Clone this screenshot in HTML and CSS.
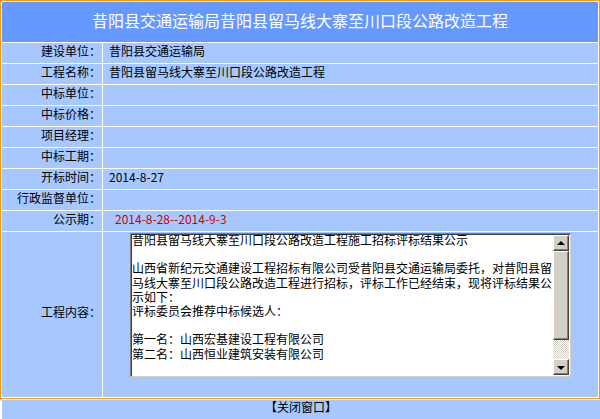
FILE: index.html
```html
<!DOCTYPE html>
<html lang="zh-CN">
<head>
<meta charset="utf-8">
<title>昔阳县交通运输局昔阳县留马线大寨至川口段公路改造工程</title>
<link rel="stylesheet" href="styles.css">
</head>
<body>
<div class="frame">
  <div class="title">昔阳县交通运输局昔阳县留马线大寨至川口段公路改造工程</div>

  <div class="label">建设单位：</div>
  <div class="value">昔阳县交通运输局</div>

  <div class="label">工程名称：</div>
  <div class="value">昔阳县留马线大寨至川口段公路改造工程</div>

  <div class="label">中标单位：</div>
  <div class="value"></div>

  <div class="label">中标价格：</div>
  <div class="value"></div>

  <div class="label">项目经理：</div>
  <div class="value"></div>

  <div class="label">中标工期：</div>
  <div class="value"></div>

  <div class="label">开标时间：</div>
  <div class="value">2014-8-27</div>

  <div class="label">行政监督单位：</div>
  <div class="value"></div>

  <div class="label">公示期：</div>
  <div class="value"><span class="red">2014-8-28--2014-9-3</span></div>

  <div class="label label-tall">工程内容：</div>
  <div class="value value-tall">
    <div class="memo">
      <div class="memo-text">昔阳县留马线大寨至川口段公路改造工程施工招标评标结果公示

山西省新纪元交通建设工程招标有限公司受昔阳县交通运输局委托，对昔阳县留
马线大寨至川口段公路改造工程进行招标，评标工作已经结束，现将评标结果公
示如下：
评标委员会推荐中标候选人：

第一名：山西宏基建设工程有限公司
第二名：山西恒业建筑安装有限公司</div>
      <div class="scrollbar">
        <div class="sb-btn"><span class="arrow-up"></span></div>
        <div class="sb-thumb"></div>
        <div class="sb-track"></div>
        <div class="sb-btn"><span class="arrow-down"></span></div>
      </div>
    </div>
  </div>
</div>
<div class="bottom-bar">【关闭窗口】</div>
</body>
</html>
```

FILE: styles.css
```css
html, body {
  margin: 0;
  padding: 0;
  background: #ffffff;
}

body {
  font-family: "Noto Sans CJK SC", "Noto Sans", sans-serif;
  font-size: 12px;
  color: #000000;
  width: 600px;
  overflow: hidden;
}

.frame {
  box-sizing: border-box;
  width: 600px;
  border: 1px solid #ff9900;
  padding: 1px;
  background: #ffffff;
  display: grid;
  grid-template-columns: 100px 1fr;
  grid-template-rows: 40px repeat(9, 20px) 165px;
  gap: 1px;
}

.title {
  grid-column: 1 / 3;
  background: #6699ff;
  color: #ffffff;
  font-size: 16px;
  line-height: 20px;
  padding-top: 8px;
  box-sizing: border-box;
  text-align: center;
}

.label {
  background: #a6c8ff;
  text-align: right;
  line-height: 16px;
  padding-right: 1px;
  white-space: nowrap;
}

.value {
  background: #a6c8ff;
  line-height: 16px;
  padding-left: 6px;
  white-space: nowrap;
}

.red {
  color: #cc0000;
  padding-left: 6px;
}

.label-tall {
  display: flex;
  align-items: center;
  justify-content: flex-end;
  padding-bottom: 5px;
  box-sizing: border-box;
}

.value-tall {
  padding-left: 0;
  display: flex;
  justify-content: center;
  align-items: flex-start;
}

.memo {
  margin-top: 1px;
  width: 441px;
  height: 144px;
  box-sizing: border-box;
  border-top: 1px solid #808080;
  border-left: 1px solid #808080;
  border-right: 1px solid #d4d0c8;
  border-bottom: 1px solid #d4d0c8;
  box-shadow: inset 1px 1px 0 #404040, inset -1px -1px 0 #ffffff;
  padding: 1px;
  background: #ffffff;
  display: flex;
}

.memo-text {
  flex: 1;
  overflow: visible;
  white-space: pre;
  font-size: 12px;
  line-height: 14.2px;
  padding-top: 0;
}

.memo-text::before {
  content: "";
  display: block;
  margin-top: -2px;
}

.scrollbar {
  width: 16px;
  display: flex;
  flex-direction: column;
  background: #d4d0c8;
}

.sb-btn,
.sb-thumb {
  box-sizing: border-box;
  background: #d4d0c8;
  border-top: 1px solid #ffffff;
  border-left: 1px solid #ffffff;
  border-right: 1px solid #404040;
  border-bottom: 1px solid #404040;
  box-shadow: inset -1px -1px 0 #808080;
}

.sb-btn {
  height: 16px;
  display: flex;
  align-items: center;
  justify-content: center;
}

.sb-thumb {
  height: 89px;
}

.sb-track {
  flex: 1;
  background: repeating-conic-gradient(#d4d0c8 0 25%, #ffffff 0 50%) 0 0 / 2px 2px;
}

.arrow-up,
.arrow-down {
  width: 0;
  height: 0;
  border-left: 4px solid transparent;
  border-right: 4px solid transparent;
}

.arrow-up {
  border-bottom: 4px solid #000000;
  margin-top: -1px;
}

.arrow-down {
  border-top: 4px solid #000000;
  margin-top: 1px;
}

.bottom-bar {
  margin: 1px 0 0 2px;
  height: 20px;
  background: #a6c8ff;
  text-align: center;
  line-height: 14px;
}
```
